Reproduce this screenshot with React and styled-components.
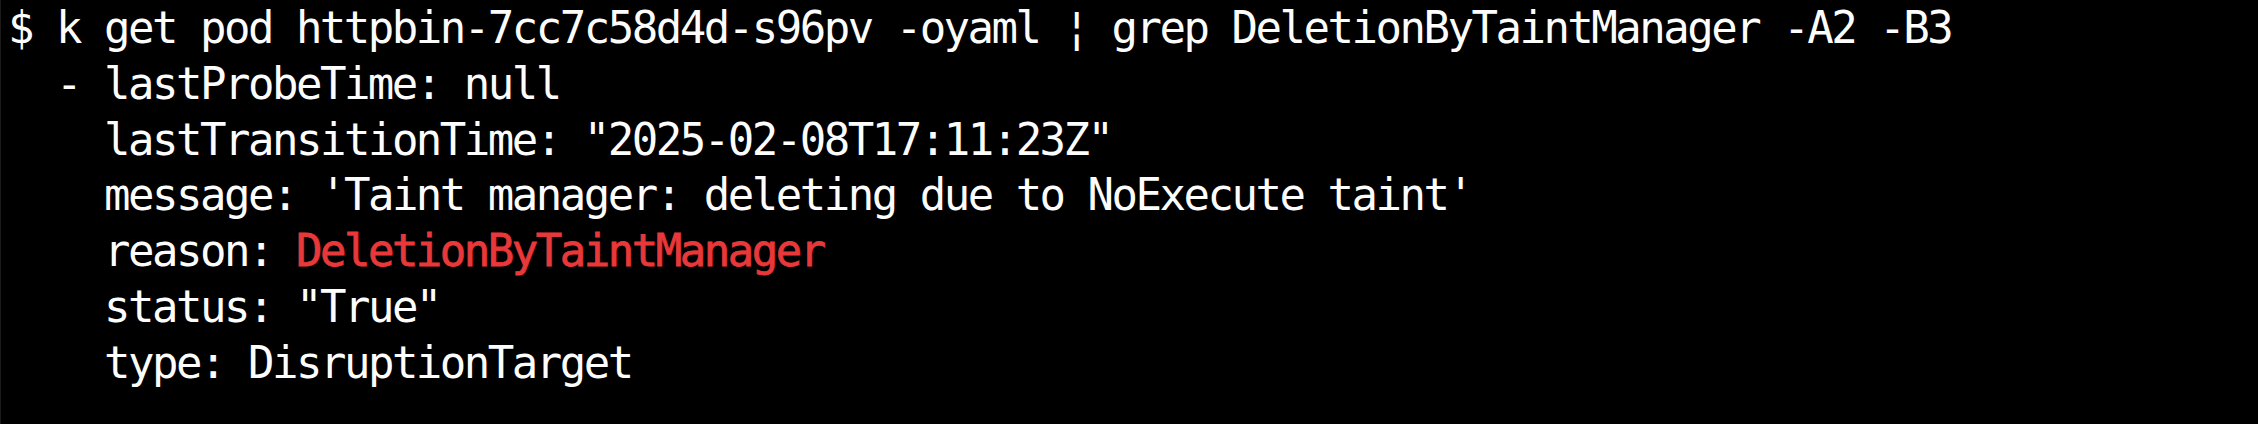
import React from 'react';
import styled, { createGlobalStyle } from 'styled-components';

const GlobalStyle = createGlobalStyle`
  html, body {
    margin: 0;
    padding: 0;
    background: #000;
  }
`;

const Terminal = styled.div`
  box-sizing: border-box;
  min-height: 100vh;
  background: #000;
  border-left: 1px solid #1c1c1c;
  padding: 0 0 0 7px;
  font-family: "DejaVu Sans Mono", "Liberation Mono", monospace;
  font-size: 44px;
  letter-spacing: -2.5px;
  line-height: 55.8px;
  color: #fdfdfd;
`;

const Line = styled.div`
  white-space: pre;
  padding-left: ${({ indent }) => indent * 24}px;
`;

// grep match: a touch heavier than the plain output
const Highlight = styled.span`
  color: #e8383a;
  -webkit-text-stroke: 0.8px #e8383a;
`;

const lines = [
  { indent: 0, text: '$ k get pod httpbin-7cc7c58d4d-s96pv -oyaml \u00a6 grep DeletionByTaintManager -A2 -B3' },
  { indent: 2, text: '- lastProbeTime: null' },
  { indent: 4, text: 'lastTransitionTime: "2025-02-08T17:11:23Z"' },
  { indent: 4, text: "message: 'Taint manager: deleting due to NoExecute taint'" },
  { indent: 4, text: 'reason: ', match: 'DeletionByTaintManager' },
  { indent: 4, text: 'status: "True"' },
  { indent: 4, text: 'type: DisruptionTarget' },
];

const App = () => (
  <>
    <GlobalStyle />
    <Terminal>
      {lines.map((line, i) => (
        <Line key={i} indent={line.indent}>
          {line.text}
          {line.match && <Highlight>{line.match}</Highlight>}
        </Line>
      ))}
    </Terminal>
  </>
);

export default App;
